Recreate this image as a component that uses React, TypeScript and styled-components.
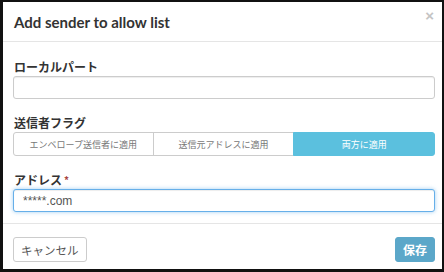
import React from 'react';
import styled, { createGlobalStyle } from 'styled-components';

const GlobalStyle = createGlobalStyle`
  html, body {
    margin: 0;
    padding: 0;
    background: #111;
  }
  * {
    box-sizing: border-box;
  }
`;

const Frame = styled.div`
  width: 444px;
  height: 272px;
  border: 2px solid #111;
  border-left-width: 3px;
  border-bottom-width: 3px;
  background: #fff;
  display: flex;
  flex-direction: column;
  font-family: 'Lato', 'Noto Sans CJK JP', sans-serif;
  color: #333;
  overflow: hidden;
`;

const Header = styled.div`
  height: 40px;
  display: flex;
  align-items: center;
  justify-content: space-between;
  padding: 0 8px 0 11px;
  border-bottom: 1px solid #e5e5e5;
`;

const Title = styled.h4`
  margin: 0;
  font-family: 'Lato', sans-serif;
  font-size: 15px;
  font-weight: 700;
  color: #333;
`;

const Close = styled.button`
  border: none;
  background: none;
  padding: 0;
  margin-top: -12px;
  font-family: 'Liberation Sans', sans-serif;
  font-size: 15px;
  font-weight: 700;
  color: #c4c4c4;
  line-height: 1;
  cursor: pointer;
`;

const Body = styled.div`
  display: flex;
  flex-direction: column;
  padding: 17px 7px 0 10px;
  gap: 16px;
  height: 181px;
`;

const Field = styled.div`
  display: flex;
  flex-direction: column;
  gap: 1px;
`;

const Label = styled.label`
  font-family: 'Noto Sans CJK JP', sans-serif;
  font-size: 12px;
  font-weight: 600;
  color: #333;
  line-height: 16px;
  padding-left: 1px;
`;

const Required = styled.span`
  color: #a94442;
  margin-left: 2px;
  font-size: 10px;
  vertical-align: top;
`;

const Input = styled.input<{ $focused?: boolean }>`
  height: 23px;
  width: 100%;
  border: 1px solid ${(p) => (p.$focused ? '#66afe9' : '#ccc')};
  border-radius: 3px;
  padding: 0 9px;
  font-family: 'Liberation Sans', sans-serif;
  font-size: 12px;
  color: #555;
  outline: none;
  box-shadow: ${(p) =>
    p.$focused
      ? 'inset 0 1px 1px rgba(0,0,0,.075), 0 0 4px rgba(102,175,233,.6)'
      : 'inset 0 1px 1px rgba(0,0,0,.075)'};
`;

const Group = styled.div`
  display: grid;
  grid-template-columns: 1fr 1fr 1fr;
  height: 24px;
`;

const SegButton = styled.button<{ $active?: boolean }>`
  border: 1px solid ${(p) => (p.$active ? '#5bc0de' : '#ccc')};
  margin-left: -1px;
  background: ${(p) => (p.$active ? '#5bc0de' : '#fff')};
  color: ${(p) => (p.$active ? '#fff' : '#777')};
  font-family: 'Noto Sans CJK JP', sans-serif;
  font-size: 9px;
  padding: 0;
  cursor: pointer;

  &:first-child {
    margin-left: 0;
    border-radius: 3px 0 0 3px;
  }
  &:last-child {
    border-radius: 0 3px 3px 0;
  }
`;

const Footer = styled.div`
  flex: 1;
  display: flex;
  align-items: flex-start;
  justify-content: space-between;
  padding: 13px 7px 0 10px;
  border-top: 1px solid #e5e5e5;
`;

const Button = styled.button<{ $primary?: boolean }>`
  height: 25px;
  padding: 0 7px;
  border-radius: 3px;
  border: 1px solid ${(p) => (p.$primary ? '#5ba7c9' : '#ccc')};
  background: ${(p) => (p.$primary ? '#5ba7c9' : '#fff')};
  color: ${(p) => (p.$primary ? '#fff' : '#555')};
  font-family: 'Noto Sans CJK JP', sans-serif;
  font-size: ${(p) => (p.$primary ? '12px' : '11.5px')};
  font-weight: ${(p) => (p.$primary ? 700 : 400)};
  cursor: pointer;
`;

export default function App() {
  return (
    <>
      <GlobalStyle />
      <Frame>
        <Header>
          <Title>Add sender to allow list</Title>
          <Close>×</Close>
        </Header>
        <Body>
          <Field>
            <Label>ローカルパート</Label>
            <Input />
          </Field>
          <Field>
            <Label>送信者フラグ</Label>
            <Group>
              <SegButton>エンベロープ送信者に適用</SegButton>
              <SegButton>送信元アドレスに適用</SegButton>
              <SegButton $active>両方に適用</SegButton>
            </Group>
          </Field>
          <Field>
            <Label>
              アドレス<Required>*</Required>
            </Label>
            <Input $focused defaultValue="*****.com" />
          </Field>
        </Body>
        <Footer>
          <Button>キャンセル</Button>
          <Button $primary>保存</Button>
        </Footer>
      </Frame>
    </>
  );
}
